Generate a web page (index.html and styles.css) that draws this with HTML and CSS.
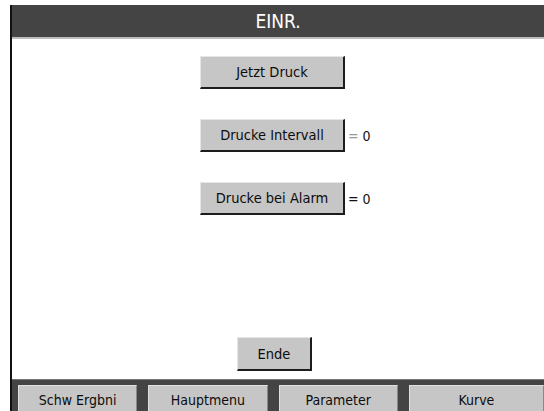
FILE: index.html
```html
<!DOCTYPE html>
<html lang="de">
<head>
  <meta charset="UTF-8">
  <title>EINR.</title>
  <meta name="viewport" content="width=device-width, initial-scale=1">
  <link rel="stylesheet" href="styles.css">
</head>
<body>
  <div class="screen">
    <div class="titlebar">EINR.</div>

    <div class="content">
      <div class="row">
        <button class="btn btn-main">Jetzt Druck</button>
      </div>
      <div class="row">
        <button class="btn btn-main">Drucke Intervall</button>
        <span class="value"><span class="eq light">=</span> 0</span>
      </div>
      <div class="row">
        <button class="btn btn-main">Drucke bei Alarm</button>
        <span class="value"><span class="eq">=</span> 0</span>
      </div>

      <div class="row row-end">
        <button class="btn btn-end">Ende</button>
      </div>
    </div>

    <div class="menubar">
      <button class="btn btn-menu">Schw Ergbni</button>
      <button class="btn btn-menu">Hauptmenu</button>
      <button class="btn btn-menu">Parameter</button>
      <button class="btn btn-menu btn-last">Kurve</button>
    </div>
  </div>
</body>
</html>
```

FILE: styles.css
```css
html, body {
  margin: 0;
  padding: 0;
  background: #fff;
  overflow: hidden;
}
body {
  font-family: "DejaVu Sans Condensed", "DejaVu Sans", sans-serif;
  font-stretch: condensed;
}
.screen {
  margin: 5px 0 0 10px;
  height: 406px;
  border-left: 2px solid #111;
  display: flex;
  flex-direction: column;
}
.titlebar {
  height: 32px;
  background: #444;
  color: #fff;
  font-size: 19px;
  display: flex;
  align-items: center;
  justify-content: center;
  border-bottom: 2px solid #bdbdbd;
}
.content {
  flex: 1;
  background: #fff;
  display: flex;
  flex-direction: column;
  gap: 30px;
  padding: 17px 0 8px 188px;
}
.row {
  display: flex;
  align-items: center;
}
.row-end {
  margin-top: auto;
  padding-left: 37px;
}
.btn {
  font-family: inherit;
  font-stretch: condensed;
  color: #0c0c0c;
  background: #c6c6c6;
  border-style: solid;
  border-width: 1px 2px 2px 1px;
  border-color: #e6e6e6 #1c1c1c #1c1c1c #e6e6e6;
  padding: 0;
  margin: 0;
}
.btn-main {
  width: 145px;
  height: 33px;
  font-size: 14.5px;
}
.btn-end {
  width: 75px;
  height: 34px;
  font-size: 14.5px;
}
.value {
  font-size: 14px;
  color: #111;
  margin-left: 3px;
}
.eq.light {
  color: #999;
}
.menubar {
  height: 26px;
  background: #444;
  display: flex;
  gap: 11px;
  padding: 5px 0 0 6px;
  border-top: 1px solid #777;
}
.btn-menu {
  width: 120px;
  height: 31px;
  font-size: 14px;
  padding-bottom: 3px;
  border-width: 1px 1px 0 1px;
  border-color: #e0e0e0 #888 #888 #e0e0e0;
}
.btn-last {
  width: 136px;
}
```
